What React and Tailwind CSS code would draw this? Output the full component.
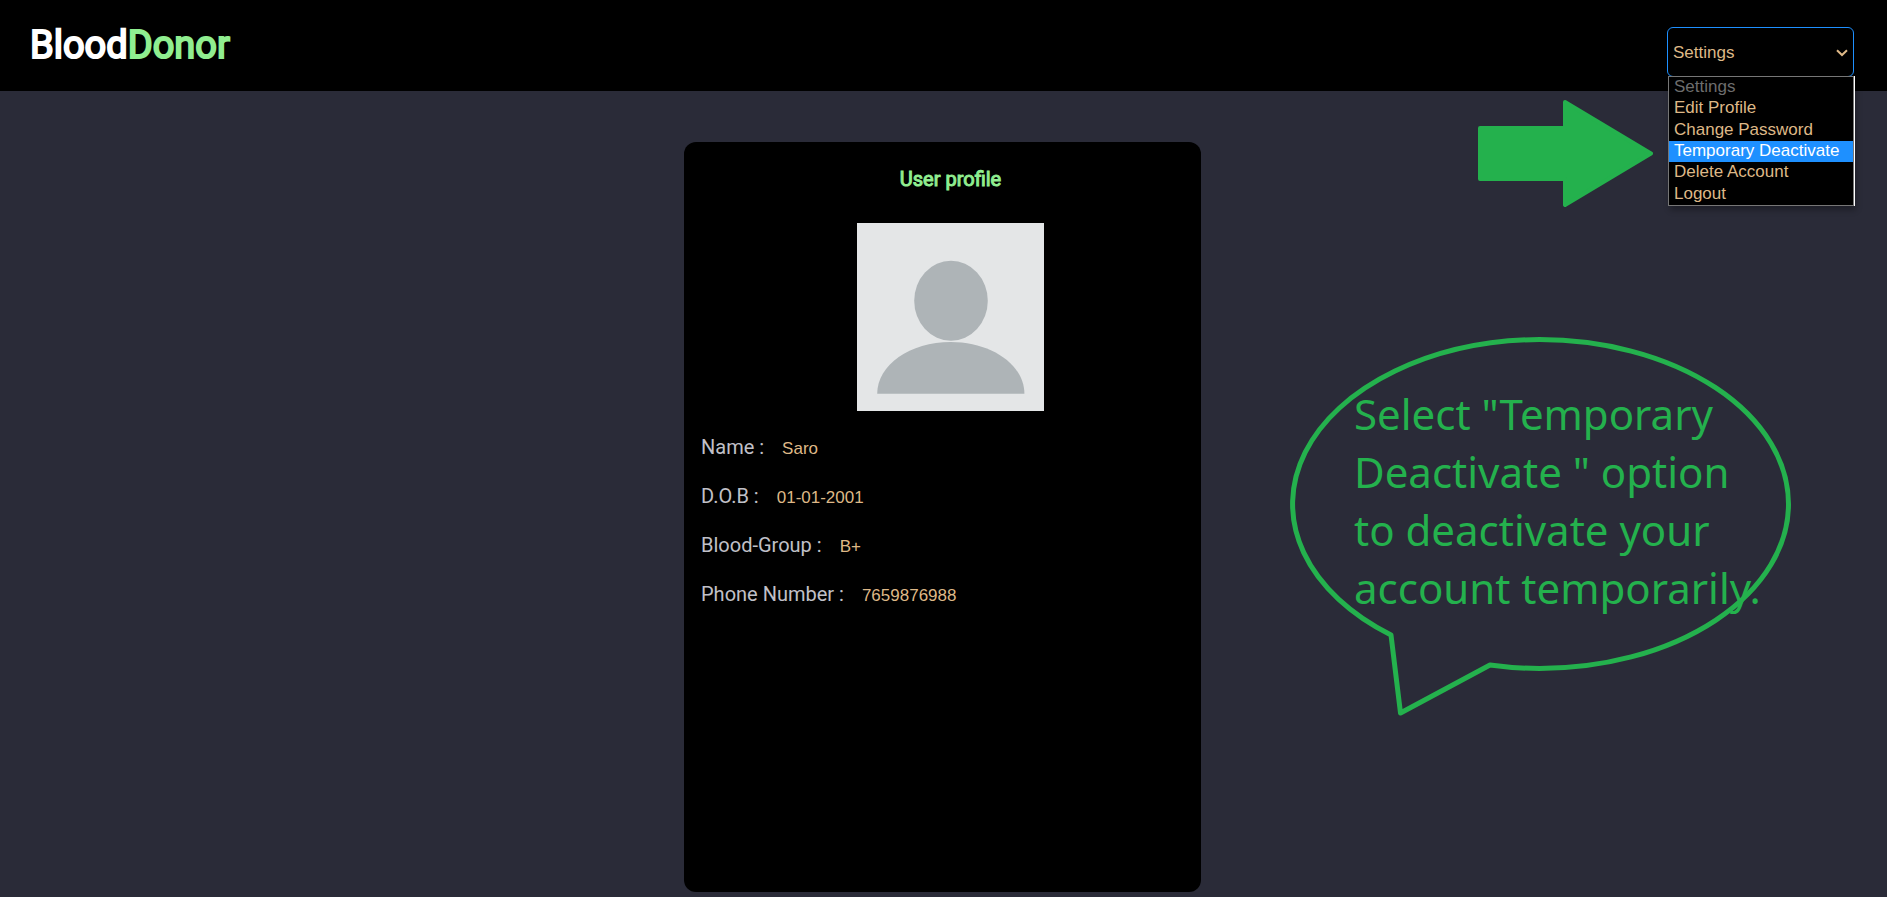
import React from "react";

const details = [
  { label: "Name :", value: "Saro" },
  { label: "D.O.B :", value: "01-01-2001" },
  { label: "Blood-Group :", value: "B+" },
  { label: "Phone Number :", value: "7659876988" },
];

const options = [
  "Settings",
  "Edit Profile",
  "Change Password",
  "Temporary Deactivate",
  "Delete Account",
  "Logout",
];

function optionClass(name) {
  if (name === "Settings") return "text-[#6d6d6d]";
  if (name === "Temporary Deactivate") return "bg-[#1e90ff] text-white";
  return "text-[#deb887]";
}

function SettingsMenu() {
  return (
    <div className="relative w-[187px] font-['Liberation_Sans',Arial,sans-serif] text-[17px] text-[#deb887]">
      <select
        aria-label="Account settings"
        defaultValue="Settings"
        className="block h-[50px] w-full appearance-none rounded-md border border-[#1e90ff] bg-black px-[5px] pt-px outline-none"
      >
        {options.map((name) => (
          <option key={name} disabled={name === "Settings"}>
            {name}
          </option>
        ))}
      </select>
      <svg
        className="pointer-events-none absolute top-5 right-[6px] h-3 w-3"
        viewBox="0 0 12 12"
        fill="none"
        stroke="#deb887"
        strokeWidth="2"
        aria-hidden="true"
      >
        <path d="M1 3.2 6 8 11 3.2" />
      </svg>
      <ul
        role="listbox"
        aria-label="Settings options"
        className="absolute top-[49px] left-px z-10 grid h-[130px] w-[186px] grid-rows-6 border border-[#767676] bg-black shadow-[1px_0_0_#fff,2px_4px_6px_rgba(0,0,0,0.3)]"
      >
        {options.map((name) => (
          <li
            key={name}
            role="option"
            aria-selected={name === "Temporary Deactivate"}
            className={"pl-[5px] leading-5 whitespace-nowrap " + optionClass(name)}
          >
            {name}
          </li>
        ))}
      </ul>
    </div>
  );
}

function Avatar() {
  return (
    <svg
      className="h-[188px] w-[187px]"
      viewBox="0 0 187 188"
      role="img"
      aria-label="Profile photo"
    >
      <rect width="187" height="188" fill="#e4e6e7" />
      <ellipse cx="94" cy="77.7" rx="36.8" ry="40" fill="#aeb4b7" />
      <path d="M20.2 170.7C20.2 142 53 119 93.8 119S167.4 142 167.4 170.7Z" fill="#aeb4b7" />
    </svg>
  );
}

function PointerArrow() {
  return (
    <svg
      className="absolute top-[100px] right-[234px] h-[107px] w-[175px]"
      viewBox="0 0 175 107"
      fill="#24b14d"
      stroke="#24b14d"
      strokeWidth="4"
      strokeLinejoin="round"
      aria-hidden="true"
    >
      <path d="M2 28H87V2L173 53.5 87 105V79H2Z" />
    </svg>
  );
}

function SpeechBubble() {
  return (
    <div className="relative h-[380px] w-[503px]">
      <svg
        className="absolute inset-0 h-full w-full"
        viewBox="0 0 503 380"
        fill="none"
        stroke="#24b14d"
        strokeWidth="5"
        aria-hidden="true"
      >
        <path
          d="M103 298A249 164.5 0 0 1 251.5 2.5 249 164.5 0 0 1 251.5 331.5 249 164.5 0 0 1 202 328L112.5 376Z"
          strokeLinejoin="round"
        />
      </svg>
      <p className="relative ml-[66px] pt-12 font-['Noto_Sans','Open_Sans',sans-serif] text-[42px] leading-[58px] whitespace-nowrap text-[#24b14d]">
        Select "Temporary
        <br />
        Deactivate " option
        <br />
        to deactivate your
        <br />
        account temporarily.
      </p>
    </div>
  );
}

export default function App() {
  return (
    <div className="relative min-h-screen bg-[#2a2b38] font-[Roboto,sans-serif]">
      <header className="flex h-[91px] items-start justify-between bg-black pr-[33px] pl-[30px]">
        <h1 className="pt-5 text-[38px] leading-[50px] font-normal text-white [-webkit-text-stroke:2px]">
          Blood<span className="text-[#90ee90]">Donor</span>
        </h1>
        <div className="pt-[27px]">
          <SettingsMenu />
        </div>
      </header>

      <PointerArrow />

      <main className="grid grid-cols-[1fr_517px_1fr] pt-[51px] pr-0.5">
        <section className="col-start-2 h-[750px] rounded-xl bg-black pt-6 pr-px pl-[17px]">
          <h2 className="text-center text-[20px] leading-[26px] font-normal text-[#90ee90] [-webkit-text-stroke:1px]">
            User profile
          </h2>
          <div className="mt-[31px] flex justify-center">
            <Avatar />
          </div>
          <dl className="mt-3 grid">
            {details.map((item) => (
              <div key={item.label} className="flex h-[49px] items-baseline gap-[18px] pt-3 leading-6">
                <dt className="text-[20px] text-[#c0c0c8]">{item.label}</dt>
                <dd className="font-['Liberation_Sans',Arial,sans-serif] text-[17px] text-[#deb887]">
                  {item.value}
                </dd>
              </div>
            ))}
          </dl>
        </section>
        <aside className="flex items-start justify-end pt-[195px] pr-[94px]">
          <SpeechBubble />
        </aside>
      </main>
    </div>
  );
}
